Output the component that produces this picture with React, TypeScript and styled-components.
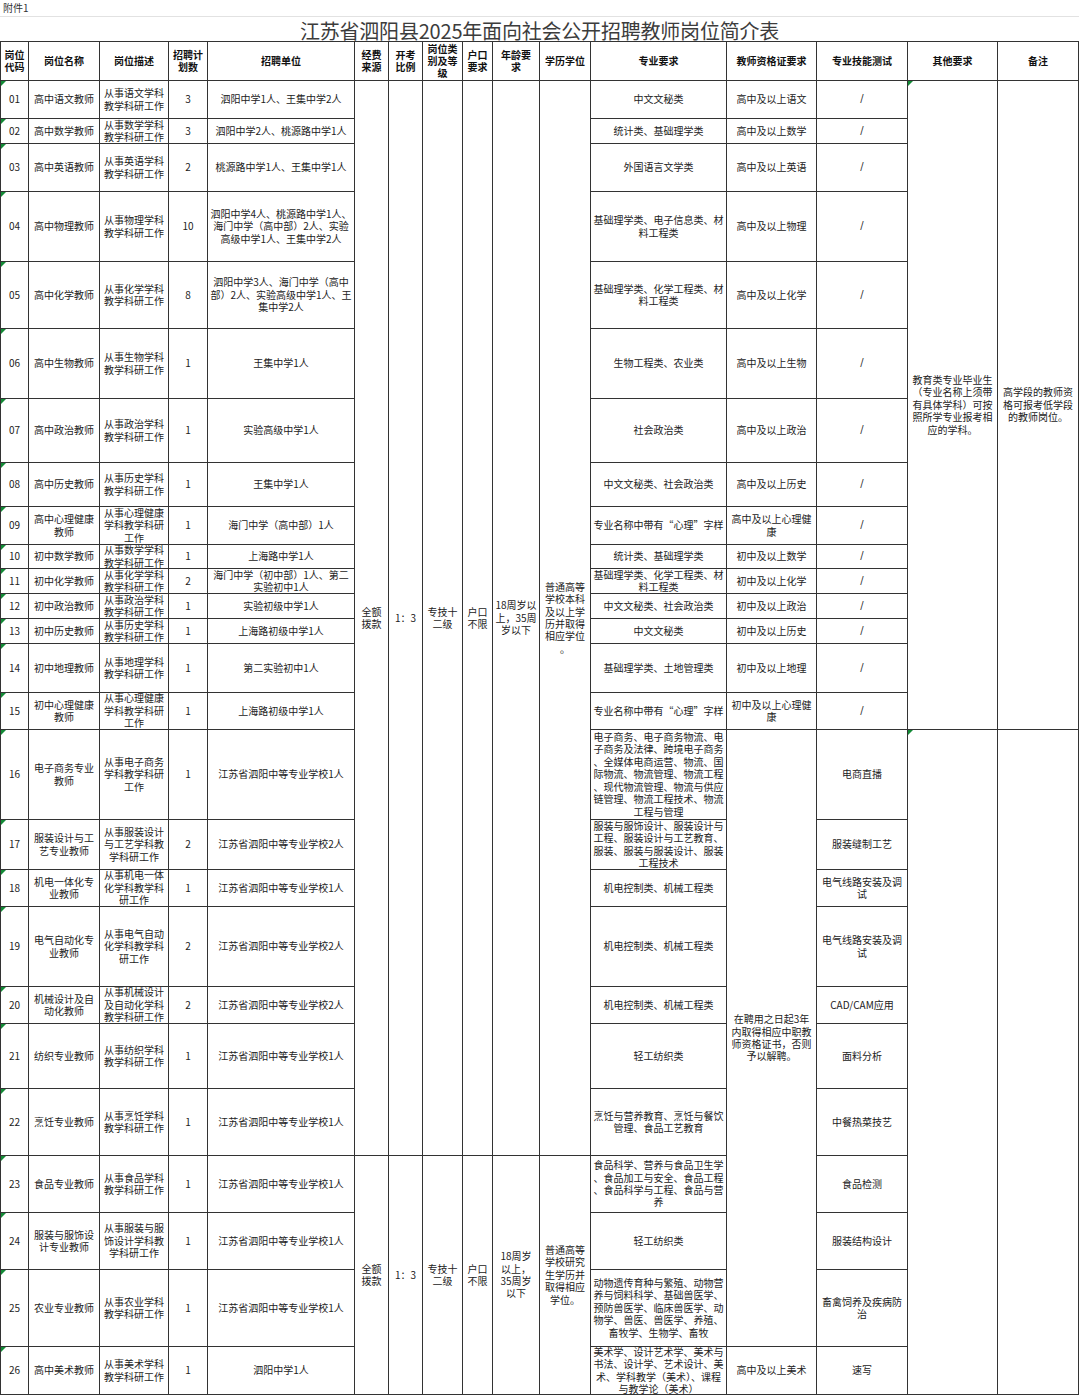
import React from 'react';
import styled, { createGlobalStyle, css } from 'styled-components';

const GlobalStyle = createGlobalStyle`
  html, body {
    margin: 0;
    padding: 0;
    background: #fff;
  }
  body {
    font-family: "Noto Sans CJK SC", "Noto Sans", sans-serif;
    color: #222;
  }
`;

// column widths / row heights measured from the sheet
const colWidths = [28, 71, 69, 39, 147, 34, 34, 40, 30, 47, 51, 136, 90, 91, 90, 81];
const rowHeights = [39, 38, 25, 48, 70, 67, 70, 64, 44, 38, 24, 25, 25, 25, 49, 37, 90, 50, 37, 80, 37, 65, 67, 57, 57, 77, 48];

interface Post {
  code: string;
  name: string;
  desc: string;
  num: string;
  unit: string;
  major: string;
  cert?: string;
  skill: string;
}

const posts: Post[] = [
  { code: '01', name: '高中语文教师', desc: '从事语文学科\n教学科研工作', num: '3', unit: '泗阳中学1人、王集中学2人', major: '中文文秘类', cert: '高中及以上语文', skill: '/' },
  { code: '02', name: '高中数学教师', desc: '从事数学学科\n教学科研工作', num: '3', unit: '泗阳中学2人、桃源路中学1人', major: '统计类、基础理学类', cert: '高中及以上数学', skill: '/' },
  { code: '03', name: '高中英语教师', desc: '从事英语学科\n教学科研工作', num: '2', unit: '桃源路中学1人、王集中学1人', major: '外国语言文学类', cert: '高中及以上英语', skill: '/' },
  { code: '04', name: '高中物理教师', desc: '从事物理学科\n教学科研工作', num: '10', unit: '泗阳中学4人、桃源路中学1人、\n海门中学（高中部）2人、实验\n高级中学1人、王集中学2人', major: '基础理学类、电子信息类、材\n料工程类', cert: '高中及以上物理', skill: '/' },
  { code: '05', name: '高中化学教师', desc: '从事化学学科\n教学科研工作', num: '8', unit: '泗阳中学3人、海门中学（高中\n部）2人、实验高级中学1人、王\n集中学2人', major: '基础理学类、化学工程类、材\n料工程类', cert: '高中及以上化学', skill: '/' },
  { code: '06', name: '高中生物教师', desc: '从事生物学科\n教学科研工作', num: '1', unit: '王集中学1人', major: '生物工程类、农业类', cert: '高中及以上生物', skill: '/' },
  { code: '07', name: '高中政治教师', desc: '从事政治学科\n教学科研工作', num: '1', unit: '实验高级中学1人', major: '社会政治类', cert: '高中及以上政治', skill: '/' },
  { code: '08', name: '高中历史教师', desc: '从事历史学科\n教学科研工作', num: '1', unit: '王集中学1人', major: '中文文秘类、社会政治类', cert: '高中及以上历史', skill: '/' },
  { code: '09', name: '高中心理健康\n教师', desc: '从事心理健康\n学科教学科研\n工作', num: '1', unit: '海门中学（高中部）1人', major: '专业名称中带有“心理”字样', cert: '高中及以上心理健\n康', skill: '/' },
  { code: '10', name: '初中数学教师', desc: '从事数学学科\n教学科研工作', num: '1', unit: '上海路中学1人', major: '统计类、基础理学类', cert: '初中及以上数学', skill: '/' },
  { code: '11', name: '初中化学教师', desc: '从事化学学科\n教学科研工作', num: '2', unit: '海门中学（初中部）1人、第二\n实验初中1人', major: '基础理学类、化学工程类、材\n料工程类', cert: '初中及以上化学', skill: '/' },
  { code: '12', name: '初中政治教师', desc: '从事政治学科\n教学科研工作', num: '1', unit: '实验初级中学1人', major: '中文文秘类、社会政治类', cert: '初中及以上政治', skill: '/' },
  { code: '13', name: '初中历史教师', desc: '从事历史学科\n教学科研工作', num: '1', unit: '上海路初级中学1人', major: '中文文秘类', cert: '初中及以上历史', skill: '/' },
  { code: '14', name: '初中地理教师', desc: '从事地理学科\n教学科研工作', num: '1', unit: '第二实验初中1人', major: '基础理学类、土地管理类', cert: '初中及以上地理', skill: '/' },
  { code: '15', name: '初中心理健康\n教师', desc: '从事心理健康\n学科教学科研\n工作', num: '1', unit: '上海路初级中学1人', major: '专业名称中带有“心理”字样', cert: '初中及以上心理健\n康', skill: '/' },
  { code: '16', name: '电子商务专业\n教师', desc: '从事电子商务\n学科教学科研\n工作', num: '1', unit: '江苏省泗阳中等专业学校1人', major: '电子商务、电子商务物流、电\n子商务及法律、跨境电子商务\n、全媒体电商运营、物流、国\n际物流、物流管理、物流工程\n、现代物流管理、物流与供应\n链管理、物流工程技术、物流\n工程与管理', skill: '电商直播' },
  { code: '17', name: '服装设计与工\n艺专业教师', desc: '从事服装设计\n与工艺学科教\n学科研工作', num: '2', unit: '江苏省泗阳中等专业学校2人', major: '服装与服饰设计、服装设计与\n工程、服装设计与工艺教育、\n服装、服装与服装设计、服装\n工程技术', skill: '服装缝制工艺' },
  { code: '18', name: '机电一体化专\n业教师', desc: '从事机电一体\n化学科教学科\n研工作', num: '1', unit: '江苏省泗阳中等专业学校1人', major: '机电控制类、机械工程类', skill: '电气线路安装及调\n试' },
  { code: '19', name: '电气自动化专\n业教师', desc: '从事电气自动\n化学科教学科\n研工作', num: '2', unit: '江苏省泗阳中等专业学校2人', major: '机电控制类、机械工程类', skill: '电气线路安装及调\n试' },
  { code: '20', name: '机械设计及自\n动化教师', desc: '从事机械设计\n及自动化学科\n教学科研工作', num: '2', unit: '江苏省泗阳中等专业学校2人', major: '机电控制类、机械工程类', skill: 'CAD/CAM应用' },
  { code: '21', name: '纺织专业教师', desc: '从事纺织学科\n教学科研工作', num: '1', unit: '江苏省泗阳中等专业学校1人', major: '轻工纺织类', skill: '面料分析' },
  { code: '22', name: '烹饪专业教师', desc: '从事烹饪学科\n教学科研工作', num: '1', unit: '江苏省泗阳中等专业学校1人', major: '烹饪与营养教育、烹饪与餐饮\n管理、食品工艺教育', skill: '中餐热菜技艺' },
  { code: '23', name: '食品专业教师', desc: '从事食品学科\n教学科研工作', num: '1', unit: '江苏省泗阳中等专业学校1人', major: '食品科学、营养与食品卫生学\n、食品加工与安全、食品工程\n、食品科学与工程、食品与营\n养', skill: '食品检测' },
  { code: '24', name: '服装与服饰设\n计专业教师', desc: '从事服装与服\n饰设计学科教\n学科研工作', num: '1', unit: '江苏省泗阳中等专业学校1人', major: '轻工纺织类', skill: '服装结构设计' },
  { code: '25', name: '农业专业教师', desc: '从事农业学科\n教学科研工作', num: '1', unit: '江苏省泗阳中等专业学校1人', major: '动物遗传育种与繁殖、动物营\n养与饲料科学、基础兽医学、\n预防兽医学、临床兽医学、动\n物学、兽医、兽医学、养殖、\n畜牧学、生物学、畜牧', skill: '畜禽饲养及疾病防\n治' },
  { code: '26', name: '高中美术教师', desc: '从事美术学科\n教学科研工作', num: '1', unit: '泗阳中学1人', major: '美术学、设计艺术学、美术与\n书法、设计学、艺术设计、美\n术、学科教学（美术）、课程\n与教学论（美术）', cert: '高中及以上美术', skill: '速写' },
];

const headers = [
  '岗位\n代码', '岗位名称', '岗位描述', '招聘计\n划数', '招聘单位', '经费\n来源', '开考\n比例',
  '岗位类\n别及等\n级', '户口\n要求', '年龄要\n求', '学历学位', '专业要求', '教师资格证要求',
  '专业技能测试', '其他要求', '备注',
];

// shared columns 6-11, first block rows 01-22, second block rows 23-26
const sharedA = ['全额\n拨款', '1：3', '专技十\n二级', '户口\n不限', '18周岁以\n上，35周\n岁以下', '普通高等\n学校本科\n及以上学\n历并取得\n相应学位\n。'];
const sharedB = ['全额\n拨款', '1：3', '专技十\n二级', '户口\n不限', '18周岁\n以上，\n35周岁\n以下', '普通高等\n学校研究\n生学历并\n取得相应\n学位。'];

const Page = styled.div`
  width: 1079px;
`;

const Annex = styled.div`
  height: 17px;
  box-sizing: border-box;
  border-bottom: 1px solid #e2e2e2;
  padding-left: 3px;
  font-size: 10px;
  line-height: 16px;
  color: #333;
`;

const Title = styled.div`
  height: 24px;
  text-align: center;
  font-size: 20px;
  line-height: 27px;
  color: #3c3c3c;
  letter-spacing: -0.2px;
`;

const Sheet = styled.div`
  display: grid;
  grid-template-columns: ${colWidths.map((w) => `${w}px`).join(' ')};
  grid-template-rows: ${rowHeights.map((h) => `${h}px`).join(' ')};
  border-top: 1px solid #333;
  border-left: 1px solid #333;
`;

const Cell = styled.div<{ $col: number; $row: number; $cs?: number; $rs?: number; $flag?: boolean }>`
  grid-column: ${(p) => `${p.$col} / span ${p.$cs ?? 1}`};
  grid-row: ${(p) => `${p.$row} / span ${p.$rs ?? 1}`};
  display: flex;
  align-items: center;
  justify-content: center;
  box-sizing: border-box;
  border-right: 1px solid #333;
  border-bottom: 1px solid #333;
  padding: 0 1px;
  overflow: hidden;
  position: relative;
  text-align: center;
  white-space: pre;
  font-size: 10px;
  line-height: 12.4px;
  color: #222;

  ${(p) =>
    p.$flag &&
    css`
      &::before {
        content: '';
        position: absolute;
        top: 0;
        left: 0;
        border-top: 5px solid #138a36;
        border-right: 5px solid transparent;
      }
    `}
`;

const HeadCell = styled(Cell)`
  font-weight: 700;
  line-height: 12px;
  color: #111;
`;

const Slash = styled.span`
  font-family: "DejaVu Sans", sans-serif;
  font-size: 10px;
  color: #333;
`;

export default function App() {
  const firstRow = 2;
  return (
    <Page lang="zh-CN">
      <GlobalStyle />
      <Annex>附件1</Annex>
      <Title>江苏省泗阳县2025年面向社会公开招聘教师岗位简介表</Title>
      <Sheet>
        {headers.map((h, i) => (
          <HeadCell key={`h${i}`} $col={i + 1} $row={1}>
            {h}
          </HeadCell>
        ))}

        {posts.map((p, i) => {
          const r = firstRow + i;
          return (
            <React.Fragment key={p.code}>
              <Cell $col={1} $row={r} $flag>{p.code}</Cell>
              <Cell $col={2} $row={r}>{p.name}</Cell>
              <Cell $col={3} $row={r}>{p.desc}</Cell>
              <Cell $col={4} $row={r}>{p.num}</Cell>
              <Cell $col={5} $row={r}>{p.unit}</Cell>
              <Cell $col={12} $row={r}>{p.major}</Cell>
              {p.cert && <Cell $col={13} $row={r}>{p.cert}</Cell>}
              <Cell $col={14} $row={r}>
                {p.skill === '/' ? <Slash>/</Slash> : p.skill}
              </Cell>
            </React.Fragment>
          );
        })}

        {sharedA.map((t, i) => (
          <Cell key={`a${i}`} $col={6 + i} $row={firstRow} $rs={22}>{t}</Cell>
        ))}
        {sharedB.map((t, i) => (
          <Cell key={`b${i}`} $col={6 + i} $row={firstRow + 22} $rs={4}>{t}</Cell>
        ))}

        <Cell $col={13} $row={firstRow + 15} $rs={10}>
          {'在聘用之日起3年\n内取得相应中职教\n师资格证书，否则\n予以解聘。'}
        </Cell>

        <Cell $col={15} $row={firstRow} $rs={15} $flag>
          {'教育类专业毕业生\n（专业名称上须带\n有具体学科）可按\n照所学专业报考相\n应的学科。'}
        </Cell>
        <Cell $col={16} $row={firstRow} $rs={15}>
          {'高学段的教师资\n格可报考低学段\n的教师岗位。'}
        </Cell>
        <Cell $col={15} $row={firstRow + 15} $rs={11} $flag />
        <Cell $col={16} $row={firstRow + 15} $rs={11} />
      </Sheet>
    </Page>
  );
}
